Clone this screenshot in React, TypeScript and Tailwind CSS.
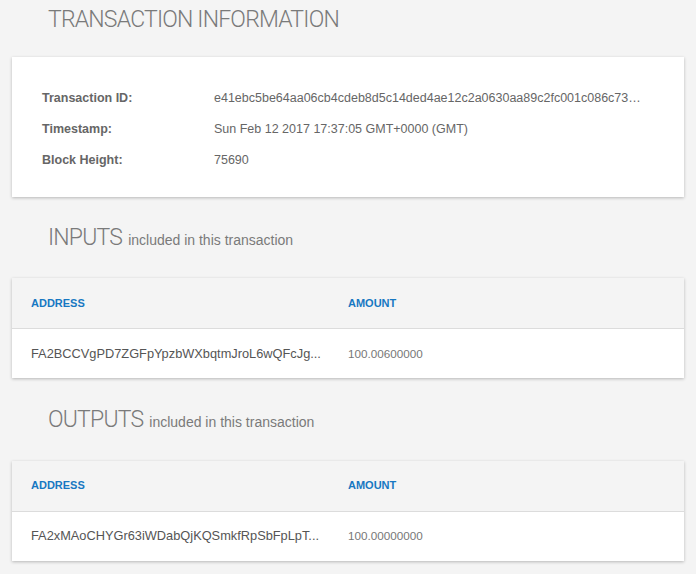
const font = { fontFamily: '"Liberation Sans", Arial, sans-serif' };
const headFont = { fontFamily: 'Roboto, "Liberation Sans", Arial, sans-serif' };

type Row = { address: string; amount: string };

const details = [
  {
    label: 'Transaction ID:',
    value: 'e41ebc5be64aa06cb4cdeb8d5c14ded4ae12c2a0630aa89c2fc001c086c73…',
  },
  { label: 'Timestamp:', value: 'Sun Feb 12 2017 17:37:05 GMT+0000 (GMT)' },
  { label: 'Block Height:', value: '75690' },
];

const inputs: Row[] = [{ address: 'FA2BCCVgPD7ZGFpYpzbWXbqtmJroL6wQFcJg...', amount: '100.00600000' }];

const outputs: Row[] = [{ address: 'FA2xMAoCHYGr63iWDabQjKQSmkfRpSbFpLpT...', amount: '100.00000000' }];

function SectionTitle({ title, sub }: { title: string; sub?: string }) {
  return (
    <h2 className="pl-12 font-light text-[#7a7a7a]" style={headFont}>
      <span className="text-[23px] tracking-[-0.8px]">{title}</span>
      {sub && (
        <span className="ml-1.5 text-[14px]" style={font}>
          {sub}
        </span>
      )}
    </h2>
  );
}

function TxTable({ rows }: { rows: Row[] }) {
  return (
    <div className="mx-3 bg-white shadow-[0_1px_3px_rgba(0,0,0,0.25)]">
      <div className="grid h-[51px] grid-cols-2 items-center border-b border-[#dcdcdc] bg-[#f4f4f4] text-[11px] font-bold text-[#1778c2]">
        <div className="pl-[19px]">ADDRESS</div>
        <div>AMOUNT</div>
      </div>
      {rows.map((r) => (
        <div key={r.address} className="grid h-[49px] grid-cols-2 items-center">
          <div className="whitespace-nowrap pl-[19px] text-[12.8px] text-[#555]">{r.address}</div>
          <div className="text-[11.7px] text-[#777]">{r.amount}</div>
        </div>
      ))}
    </div>
  );
}

export default function App() {
  return (
    <div className="min-h-[574px] w-[696px] overflow-hidden bg-[#f4f4f4] pb-3" style={font}>
      <div className="pt-[3px]">
        <SectionTitle title="TRANSACTION INFORMATION" />
      </div>

      {/* Transaction details card */}
      <div className="mx-3 mt-[19px] bg-white px-[30px] pb-[21px] pt-[26px] shadow-[0_1px_3px_rgba(0,0,0,0.25)]">
        {details.map((d) => (
          <div key={d.label} className="flex h-[31px] items-center text-[12.5px]">
            <div className="w-[172px] shrink-0 font-bold text-[#666]">{d.label}</div>
            <div className="whitespace-nowrap text-[#666]">{d.value}</div>
          </div>
        ))}
      </div>

      <div className="mt-[24px]">
        <SectionTitle title="INPUTS" sub="included in this transaction" />
      </div>
      <div className="mt-[23px]">
        <TxTable rows={inputs} />
      </div>

      <div className="mt-[25px]">
        <SectionTitle title="OUTPUTS" sub="included in this transaction" />
      </div>
      <div className="mt-[23px]">
        <TxTable rows={outputs} />
      </div>
    </div>
  );
}
